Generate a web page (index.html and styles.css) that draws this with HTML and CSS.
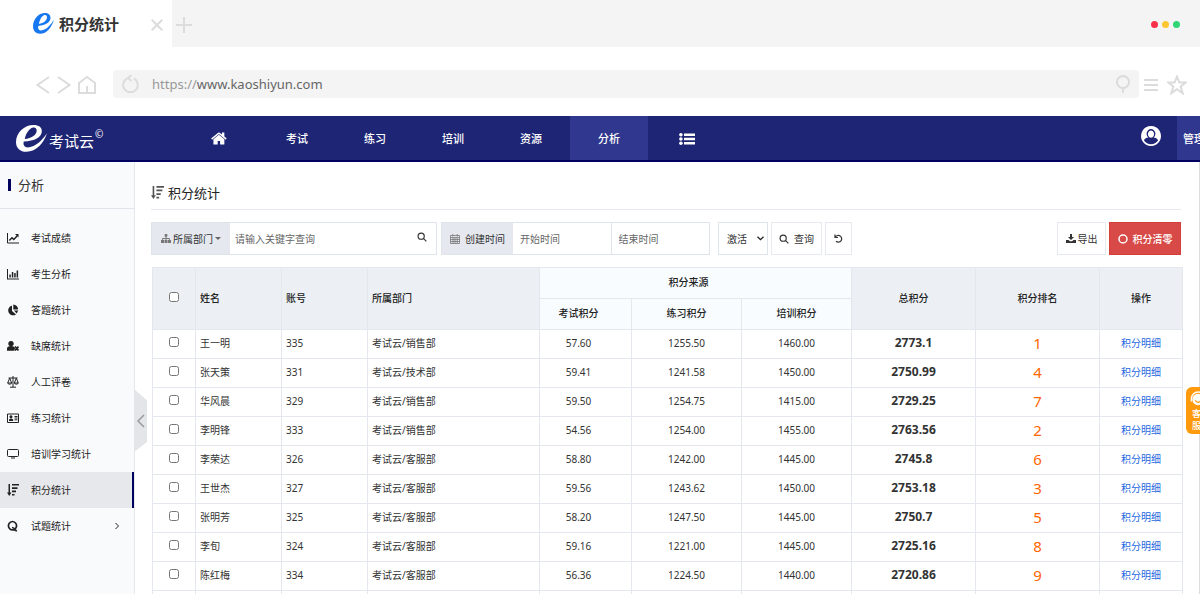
FILE: index.html
```html
<!DOCTYPE html>
<html lang="zh-CN">
<head>
<meta charset="utf-8">
<title>积分统计</title>
<link rel="stylesheet" href="styles.css">
</head>
<body>
<svg class="defs" aria-hidden="true">
  <symbol id="e" viewBox="0 0 30 26"><path fill-rule="evenodd" d="M30 8C27 17 20 25.800 10 25.800C4 25.800 0 22 0 16.500C0 7.500 8 0 17 0C22 0 25 2 25 6C25 11.500 18 15.500 7.500 16C6.500 20 9 22.300 13 21.500C20 20 25 15 30 8ZM8.500 13.500C15 13 19.500 9.500 20 6C20.200 3.200 18.500 2 16.500 2.500C12.500 3.500 9.500 8.500 8.500 13.500Z"/></symbol>
  <symbol id="search" viewBox="0 0 12 12"><g fill="none" stroke="currentColor" stroke-width="1.400"><circle cx="5" cy="5" r="3.700"/><path d="M8 8l3.200 3.200"/></g></symbol>
  <symbol id="sort" viewBox="0 0 12 12"><path d="M1.500 0h1.500v8.500h1.500L2.250 12 0 8.500h1.500zM5 0h7v1.600H5zM5 3.300h5.500v1.600H5zM5 6.600h4v1.600H5zM5 9.900h2.500v1.600H5z"/></symbol>
</svg>

<div class="tabs">
  <div class="tab">
    <svg class="tab-logo" viewBox="0 0 30 26" preserveAspectRatio="none"><use href="#e"/></svg>
    <span class="tab-name">积分统计</span>
    <button class="bare tab-close" aria-label="关闭"><svg width="12" height="12" viewBox="0 0 12 12"><path class="line" d="M.7.700l10.600 10.600M11.300.700.700 11.300"/></svg></button>
  </div>
  <button class="bare tab-new" aria-label="新标签"><svg width="16" height="16" viewBox="0 0 16 16"><path class="line" d="M8 0v16M0 8h16"/></svg></button>
  <div class="dots"><i class="red"></i><i class="yellow"></i><i class="green"></i></div>
</div>

<div class="address">
  <div class="history">
    <button class="bare" aria-label="后退"><svg width="14" height="18" viewBox="0 0 14 18"><path class="line" d="M13 1 1.500 9 13 17"/></svg></button>
    <button class="bare" aria-label="前进"><svg width="14" height="18" viewBox="0 0 14 18"><path class="line" d="M1 1l11.500 8L1 17"/></svg></button>
    <button class="bare" aria-label="主页"><svg width="18" height="18" viewBox="0 0 18 18"><path class="line" d="M1 7 9 1l8 6v10H1zM9 10v7"/></svg></button>
  </div>
  <div class="url">
    <svg width="17" height="18" viewBox="0 0 17 18"><path class="line" d="M5 3.500A7.300 7.300 0 1 0 12 3.500M9.500 0 6 3l3.500 3"/></svg>
    <span class="url-text"><span class="scheme">https://</span>www.kaoshiyun.com</span>
    <svg width="14" height="18" viewBox="0 0 14 18"><path class="line" d="M7 13v5M7 1a6 6 0 1 0 .01 0z"/></svg>
  </div>
  <button class="bare" aria-label="菜单"><svg width="14" height="12" viewBox="0 0 14 12"><path class="line" d="M0 1h14M0 6h14M0 11h14"/></svg></button>
  <button class="bare" aria-label="收藏"><svg width="20" height="20" viewBox="0 0 20 20"><path class="line" d="M10 1.500l2.400 6h6.300l-5 4 2 6.800-5.700-4-5.700 4 2-6.800-5-4h6.300z"/></svg></button>
</div>

<header class="nav">
  <a class="brand" href="#"><svg width="31" height="27" viewBox="0 0 30 26" preserveAspectRatio="none"><use href="#e"/></svg><span>考试云</span><sup>©</sup></a>
  <nav class="menu">
    <a href="#" aria-label="首页"><svg width="17" height="17" viewBox="0 0 1792 1792"><path d="M1408 992v480q0 26-19 45t-45 19h-384v-384h-256v384h-384q-26 0-45-19t-19-45v-480q0-1 .5-3t.5-3l575-474 575 474q1 2 1 6zm223-69l-62 74q-8 9-21 11h-3q-13 0-21-7l-692-577-692 577q-12 8-24 7-13-2-21-11l-62-74q-8-10-7-23.500t11-21.500l719-599q32-26 76-26t76 26l244 204v-195q0-14 9-23t23-9h192q14 0 23 9t9 23v408l219 182q10 8 11 21.500t-7 23.500z"/></svg></a>
    <a href="#">考试</a>
    <a href="#">练习</a>
    <a href="#">培训</a>
    <a href="#">资源</a>
    <a class="current" href="#">分析</a>
    <a href="#" aria-label="更多"><svg width="16" height="12" viewBox="0 0 16 12"><path d="M5 .500h11v2.500H5zM5 4.800h11v2.500H5zM5 9h11v2.500H5z"/><circle cx="1.900" cy="1.800" r="1.800"/><circle cx="1.900" cy="6" r="1.800"/><circle cx="1.900" cy="10.200" r="1.800"/></svg></a>
  </nav>
  <a class="user" href="#" aria-label="用户"><svg width="20" height="20" viewBox="0 0 20 20"><path fill-rule="evenodd" d="M10 0a10 10 0 1 0 .01 0zM10 3a4.500 4.800 0 0 1 2.600 8.600c2.400.2 4 1.200 4.400 2.900a8.300 8.300 0 0 1-14 0c.4-1.700 2-2.700 4.400-2.900A4.500 4.800 0 0 1 10 3z"/><path d="M10 4.500a3.100 3.600 0 1 0 .01 0z"/></svg></a>
  <a class="admin" href="#">管理</a>
</header>

<div class="body">
  <aside class="side">
    <h2>分析</h2>
    <ul>
      <li><a href="#"><svg viewBox="0 0 12 12"><path class="thin" d="M.500 1v10H12"/><path fill="none" stroke="currentColor" stroke-width="1.500" d="M2.300 8.500l2.700-2.700 1.800 1.700 3.500-3.700"/><path d="M8 2h3.500v3.500z"/></svg>考试成绩</a></li>
      <li><a href="#"><svg viewBox="0 0 12 12"><path d="M0 1h1v9.500h11v1H0zM2.300 6.500h1.500v3H2.300zM4.800 4h1.500v5.500H4.800zM7.200 5h1.500v4.500H7.200zM9.600 2.500h1.500v7H9.600z"/></svg>考生分析</a></li>
      <li><a href="#"><svg viewBox="0 0 12 12"><path d="M5 1.500V7l4 3.500A5 5 0 1 1 5 1.500zM6.300.500a5 5 0 0 1 4.800 5H6.300zM7 6.500h4a5 5 0 0 1-1.400 3z"/></svg>答题统计</a></li>
      <li><a href="#"><svg viewBox="0 0 12 12"><path d="M4 1a2.700 2.700 0 1 1-.01 0zM2 6.200h4.200L8.200 8l-1 2.800H0V8.500q0-2 2-2.300z"/><path class="thin" stroke-width="1.800" d="M8 6.500l3.500 4M11.500 6.500 8 10.500"/></svg>缺席统计</a></li>
      <li><a href="#"><svg viewBox="0 0 12 12"><path class="thin" d="M6 0v11M3 11.200h6M1.500 2h9M2.700 2.200.700 7h4zM9.300 2.200l-2 4.800h4zM.7 7.500q2 1.500 4 0M7.300 7.500q2 1.500 4 0"/></svg>人工评卷</a></li>
      <li><a href="#"><svg viewBox="0 0 12 12"><path class="thin" d="M.500 2h11v8.500H.500zM7.500 4.500h3M7.500 6h3M7.500 7.800h3"/><path d="M4 3.200a1.500 1.500 0 1 1-.01 0zM2 9V7.500Q4 5.500 6.200 7.500V9z"/></svg>练习统计</a></li>
      <li><a href="#"><svg viewBox="0 0 12 12"><path class="thin" d="M1.500 1.500h9q1 0 1 1v5q0 1-1 1h-9q-1 0-1-1v-5q0-1 1-1zM4 10h4"/></svg>培训学习统计</a></li>
      <li><a class="current" href="#"><svg viewBox="0 0 12 12"><use href="#sort"/></svg>积分统计</a></li>
      <li><a href="#"><svg viewBox="0 0 12 12"><path fill="none" stroke="currentColor" stroke-width="1.700" d="M5.500 1.500a4 4.200 0 1 1-.01 0zM5 7.500q2 0 2.800 2 .8 1.500 2.200 1"/></svg>试题统计<svg class="more" viewBox="0 0 6 8"><path class="thin" d="M1.500 1 4.500 4 1.500 7"/></svg></a></li>
    </ul>
    <button class="bare fold" aria-label="收起"><svg width="8" height="14" viewBox="0 0 8 14"><path fill="none" stroke="#999" stroke-width="1.500" d="M7 1 1 7l6 6"/></svg></button>
  </aside>

  <main class="main">
    <h1><svg width="13" height="13" viewBox="0 0 12 12"><use href="#sort"/></svg>积分统计</h1>
    <form class="tools">
      <div class="group search">
        <button type="button" class="dept"><svg width="10" height="9" viewBox="0 0 10 9"><path d="M3.700 0h2.600v2.800H5.500v1.200h3.300v2H10V9H7V6h.9V5H5.500v1h1V9h-3V6h1V5H2.100v1H3v3H0V6h1.200V4h3.300V2.800h-.8z"/></svg>所属部门<i class="caret"></i></button>
        <input type="text" aria-label="关键字" placeholder="请输入关键字查询">
        <button type="button" class="bare lens" aria-label="搜索"><svg width="10" height="10"><use href="#search"/></svg></button>
      </div>
      <div class="group time">
        <label for="from"><svg width="10" height="10" viewBox="0 0 10 10"><path fill="none" stroke="currentColor" stroke-width=".8" d="M.500 1.500h9v8h-9zM.500 3.500h9M.500 5.500h9M.500 7.500h9M3 3.500v6M5 3.500v6M7.200 3.500v6M2.800 0v2.500M7.200 0v2.500"/></svg>创建时间</label>
        <input id="from" type="text" placeholder="开始时间">
        <input type="text" aria-label="结束时间" placeholder="结束时间">
      </div>
      <div class="pick"><select aria-label="状态"><option>激活</option></select><svg width="7" height="5" viewBox="0 0 7 5"><path fill="none" stroke="#222" stroke-width="1.300" d="M.500.700l3 3 3-3"/></svg></div>
      <button type="button" class="btn query"><svg width="10" height="10"><use href="#search"/></svg>查询</button>
      <button type="button" class="btn reset" aria-label="重置"><svg width="9" height="9" viewBox="0 0 9 9"><path fill="none" stroke="currentColor" stroke-width="1.200" d="M1 .500v3h3M1.300 3.200A3.400 3.400 0 1 1 2 7.300"/></svg></button>
      <button type="button" class="btn export"><svg width="10" height="9" viewBox="0 0 10 9"><path d="M4 0h2v3h2L5 6 2 3h2zM0 6h2.500L4 7.300h2L7.500 6H10v3H0z"/></svg>导出</button>
      <button type="button" class="btn clear"><svg width="10" height="10" viewBox="0 0 10 10"><circle cx="5" cy="5" r="4" fill="none" stroke="currentColor" stroke-width="1.500"/></svg>积分清零</button>
    </form>

    <table>
      <colgroup><col class="c-check"><col class="c-name"><col class="c-no"><col class="c-dept"><col class="c-exam"><col class="c-src"><col class="c-src"><col class="c-total"><col class="c-total"><col class="c-act"></colgroup>
      <thead>
        <tr><th rowspan="2"><input type="checkbox" aria-label="全选"></th><th rowspan="2" class="l">姓名</th><th rowspan="2" class="l">账号</th><th rowspan="2" class="l">所属部门</th><th colspan="3" class="src top">积分来源</th><th rowspan="2">总积分</th><th rowspan="2">积分排名</th><th rowspan="2">操作</th></tr>
        <tr><th class="src score">考试积分</th><th class="src">练习积分</th><th class="src">培训积分</th></tr>
      </thead>
      <tbody>
        <tr><td><input type="checkbox" aria-label="王一明"></td><td class="l">王一明</td><td class="l">335</td><td class="l">考试云/销售部</td><td class="score">57.60</td><td>1255.50</td><td>1460.00</td><td class="total">2773.1</td><td class="rank">1</td><td><a href="#">积分明细</a></td></tr>
        <tr><td><input type="checkbox" aria-label="张天策"></td><td class="l">张天策</td><td class="l">331</td><td class="l">考试云/技术部</td><td class="score">59.41</td><td>1241.58</td><td>1450.00</td><td class="total">2750.99</td><td class="rank">4</td><td><a href="#">积分明细</a></td></tr>
        <tr><td><input type="checkbox" aria-label="华风晨"></td><td class="l">华风晨</td><td class="l">329</td><td class="l">考试云/销售部</td><td class="score">59.50</td><td>1254.75</td><td>1415.00</td><td class="total">2729.25</td><td class="rank">7</td><td><a href="#">积分明细</a></td></tr>
        <tr><td><input type="checkbox" aria-label="李明锋"></td><td class="l">李明锋</td><td class="l">333</td><td class="l">考试云/销售部</td><td class="score">54.56</td><td>1254.00</td><td>1455.00</td><td class="total">2763.56</td><td class="rank">2</td><td><a href="#">积分明细</a></td></tr>
        <tr><td><input type="checkbox" aria-label="李荣达"></td><td class="l">李荣达</td><td class="l">326</td><td class="l">考试云/客服部</td><td class="score">58.80</td><td>1242.00</td><td>1445.00</td><td class="total">2745.8</td><td class="rank">6</td><td><a href="#">积分明细</a></td></tr>
        <tr><td><input type="checkbox" aria-label="王世杰"></td><td class="l">王世杰</td><td class="l">327</td><td class="l">考试云/客服部</td><td class="score">59.56</td><td>1243.62</td><td>1450.00</td><td class="total">2753.18</td><td class="rank">3</td><td><a href="#">积分明细</a></td></tr>
        <tr><td><input type="checkbox" aria-label="张明芳"></td><td class="l">张明芳</td><td class="l">325</td><td class="l">考试云/客服部</td><td class="score">58.20</td><td>1247.50</td><td>1445.00</td><td class="total">2750.7</td><td class="rank">5</td><td><a href="#">积分明细</a></td></tr>
        <tr><td><input type="checkbox" aria-label="李旬"></td><td class="l">李旬</td><td class="l">324</td><td class="l">考试云/客服部</td><td class="score">59.16</td><td>1221.00</td><td>1445.00</td><td class="total">2725.16</td><td class="rank">8</td><td><a href="#">积分明细</a></td></tr>
        <tr><td><input type="checkbox" aria-label="陈红梅"></td><td class="l">陈红梅</td><td class="l">334</td><td class="l">考试云/客服部</td><td class="score">56.36</td><td>1224.50</td><td>1440.00</td><td class="total">2720.86</td><td class="rank">9</td><td><a href="#">积分明细</a></td></tr>
        <tr><td></td><td></td><td></td><td></td><td></td><td></td><td></td><td></td><td></td><td></td></tr>
      </tbody>
    </table>
  </main>
  <button class="service"><svg width="18" height="17" viewBox="0 0 18 18"><circle cx="9" cy="9" r="6" fill="#fff"/><path fill="none" stroke="#fff" stroke-width="1.500" d="M2 11V8a7 7 0 0 1 14 0v3"/><path fill="none" stroke="#ff9a0d" stroke-width="1.300" d="M6 10q3 4 6 0"/></svg><span>客</span><span>服</span></button>
</div>
</body>
</html>
```
FILE: styles.css
```css
* { box-sizing: border-box; }
body {
  margin: 0;
  height: 100vh;
  overflow: hidden;
  display: flex;
  flex-direction: column;
  background: #fff;
  color: #333;
  font: 10px/16px "Noto Sans", "Noto Sans CJK SC", sans-serif;
}
button, input, select { font: inherit; color: inherit; border-radius: 0; margin: 0; }
a { color: inherit; text-decoration: none; }
svg { flex: none; fill: currentColor; display: block; }
.defs { position: absolute; width: 0; height: 0; }
.bare { border: 0; padding: 0; background: none; display: flex; align-items: center; justify-content: center; }
.line { fill: none; stroke: #dcdcdc; stroke-width: 2; }
.thin { fill: none; stroke: currentColor; }

.tabs { flex: none; display: flex; align-items: center; height: 47px; background: #f4f4f4; }
.tab { width: 172px; height: 100%; padding: 0 9px 0 33px; display: flex; align-items: center; background: #fff; }
.tab-logo { width: 21px; height: 21px; color: #1677f0; }
.tab-name { margin-left: 5px; font-size: 15px; line-height: 24px; font-weight: 700; }
.tab-close { margin-left: auto; }
.tab-new { margin-left: 4px; }
.tab-close, .tab-new { padding-top: 3px; }
.dots { margin-left: auto; padding: 2px 20px 0 0; display: flex; gap: 4px; }
.dots i { width: 7px; height: 7px; border-radius: 50%; }
.red { background: #f8314b; }
.yellow { background: #ffc634; }
.green { background: #2fd673; }

.address { flex: none; display: flex; align-items: center; height: 69px; padding: 7px 13px 0 36px; }
.address > .bare { margin-left: 5px; }
.address > .bare + .bare { margin-left: 9px; }
.history { display: flex; gap: 7px; padding-right: 17px; }
.url { flex: 1; display: flex; align-items: center; height: 28px; padding: 0 9px; border-radius: 4px; background: #f4f4f4; margin-bottom: 2px; }
.url-text { flex: 1; margin-left: 13px; font-size: 13px; line-height: 20px; color: #666; }
.scheme { color: #999; }

.nav { flex: none; display: flex; height: 46px; background: #1e2575; border-bottom: 2px solid #00005f; color: #fff; font-size: 11px; overflow: hidden; }
.brand { width: 180px; padding-left: 16px; display: flex; align-items: center; font-size: 15px; }
.brand span { margin: 5px 0 0 2px; }
.brand sup { font-size: 10px; margin: 0 0 9px 1px; line-height: 12px; }
.menu { display: flex; }
.menu a { width: 78px; padding-top: 1px; display: flex; align-items: center; justify-content: center; font-weight: 500; }
.menu .current, .admin { background: #30378e; }
.user { margin-left: auto; padding: 10px 16px 0 0; }
.admin { width: 23px; flex: none; padding-left: 6px; line-height: 46px; white-space: nowrap; overflow: hidden; font-weight: 500; }

.body { flex: 1; min-height: 0; display: flex; position: relative; }
.side { flex: none; width: 135px; position: relative; background: #f9fafc; border-right: 1px solid #e6e8ec; }
.side h2 { margin: 0; height: 47px; display: flex; align-items: center; gap: 7px; padding-left: 8px; border-bottom: 1px solid #e1e4ea; font-size: 13px; font-weight: 400; }
.side h2::before { content: ""; width: 3px; height: 12px; background: #00005f; }
.side ul { list-style: none; margin: 0; padding: 11px 0 0; }
.side li a { display: flex; align-items: center; gap: 12px; height: 36px; padding: 0 14px 0 7px; color: #222; }
.side li svg { width: 12px; height: 12px; }
.side li .more { width: 6px; height: 8px; margin-left: auto; }
.side li .current { background: #e7e8eb; border-right: 2px solid #00005f; }
.fold { position: absolute; left: 134px; top: 227px; width: 13px; height: 63px; background: #e3e5e8; clip-path: polygon(0 0, 100% 18%, 100% 84%, 0 100%); }

.main { flex: 1; min-width: 0; padding: 14px 18px 0 16px; border-right: 1px solid #ddd; }
h1 { margin: 0; height: 34px; display: flex; align-items: center; gap: 4px; border-bottom: 1px solid #e6e9ee; font-size: 13px; font-weight: 400; color: #222; }
h1 svg { color: #555; }
.tools { display: flex; height: 33px; margin-top: 12px; }
.tools > *, .group > * { height: 100%; }
.group { display: flex; border: 1px solid #dfe3ea; margin-right: 4px; background: #fff; }
.group input { border: 0; flex: 1; min-width: 0; padding: 0 7px; background: none; }
.group input::placeholder { color: #666; opacity: 1; }
.search { width: 286px; }
.dept, label { display: flex; align-items: center; gap: 2px; border: 0; background: #e5e9ef; padding: 0 8px; white-space: nowrap; }
.dept { width: 78px; justify-content: center; }
.group .dept + input { padding-left: 5px; }
.dept svg, label svg { color: #777; }
.caret { border: 3px solid transparent; border-top-color: #666; border-bottom: 0; }
.lens { width: 28px; padding-bottom: 3px; }
.time { width: 269px; margin-right: 8px; }
.time label { width: 71px; gap: 5px; }
.time input + input { border-left: 1px solid #dfe3ea; }
.pick { display: grid; width: 50px; align-items: center; margin-right: 3px; }
.pick > * { grid-area: 1 / 1; }
.pick svg { justify-self: end; margin-right: 4px; }
select { appearance: none; width: 100%; height: 100%; padding: 0 8px; border: 1px solid #dfe3ea; background: #fff; }
.btn { display: flex; align-items: center; justify-content: center; gap: 5px; padding: 0; border: 1px solid #e6e9ee; background: #fff; margin-right: 3px; }
.query { width: 51px; }
.reset { width: 27px; }
.export { width: 49px; margin-left: auto; gap: 2px; }
.clear { width: 72px; margin-right: 0; background: #d84a47; border-color: #d43f3a; color: #fff; font-weight: 500; }

table { width: calc(100% - 1px); margin: 12px 0 0 1px; border-collapse: collapse; table-layout: fixed; }
.c-check { width: 43px; }
.c-name, .c-no { width: 86px; }
.c-dept { width: 172px; }
.c-exam { width: 92px; }
.c-src { width: 110px; }
.c-total { width: 124px; }
.c-act { width: 83px; }
th, td { padding: 0 0 2px; border: 1px solid #e4e7ee; text-align: center; height: 29px; line-height: 16px; }
th { height: 31px; background: #ecf0f4; color: #222; font-weight: 500; }
.src { background: #f8fcff; }
.top { padding-right: 14px; }
.l { text-align: left; padding-left: 4px; }
.score { padding-right: 14px; }
td input, th input { display: block; width: 10px; height: 10px; margin: 0 auto 2px; }
.total { font-size: 12px; font-weight: 700; }
.rank { font-size: 15px; color: #f60; padding-bottom: 3px; }
td a { color: #2468e0; }

.service { position: absolute; right: 0; top: 225px; width: 14px; height: 47px; padding: 2px 0 0 3px; border: 0; border-radius: 6px 0 0 6px; background: #ff9a0d; color: #fff; overflow: hidden; text-align: left; }
.service span { display: block; padding-left: 3px; font-size: 9px; line-height: 12px; font-weight: 500; }
```
